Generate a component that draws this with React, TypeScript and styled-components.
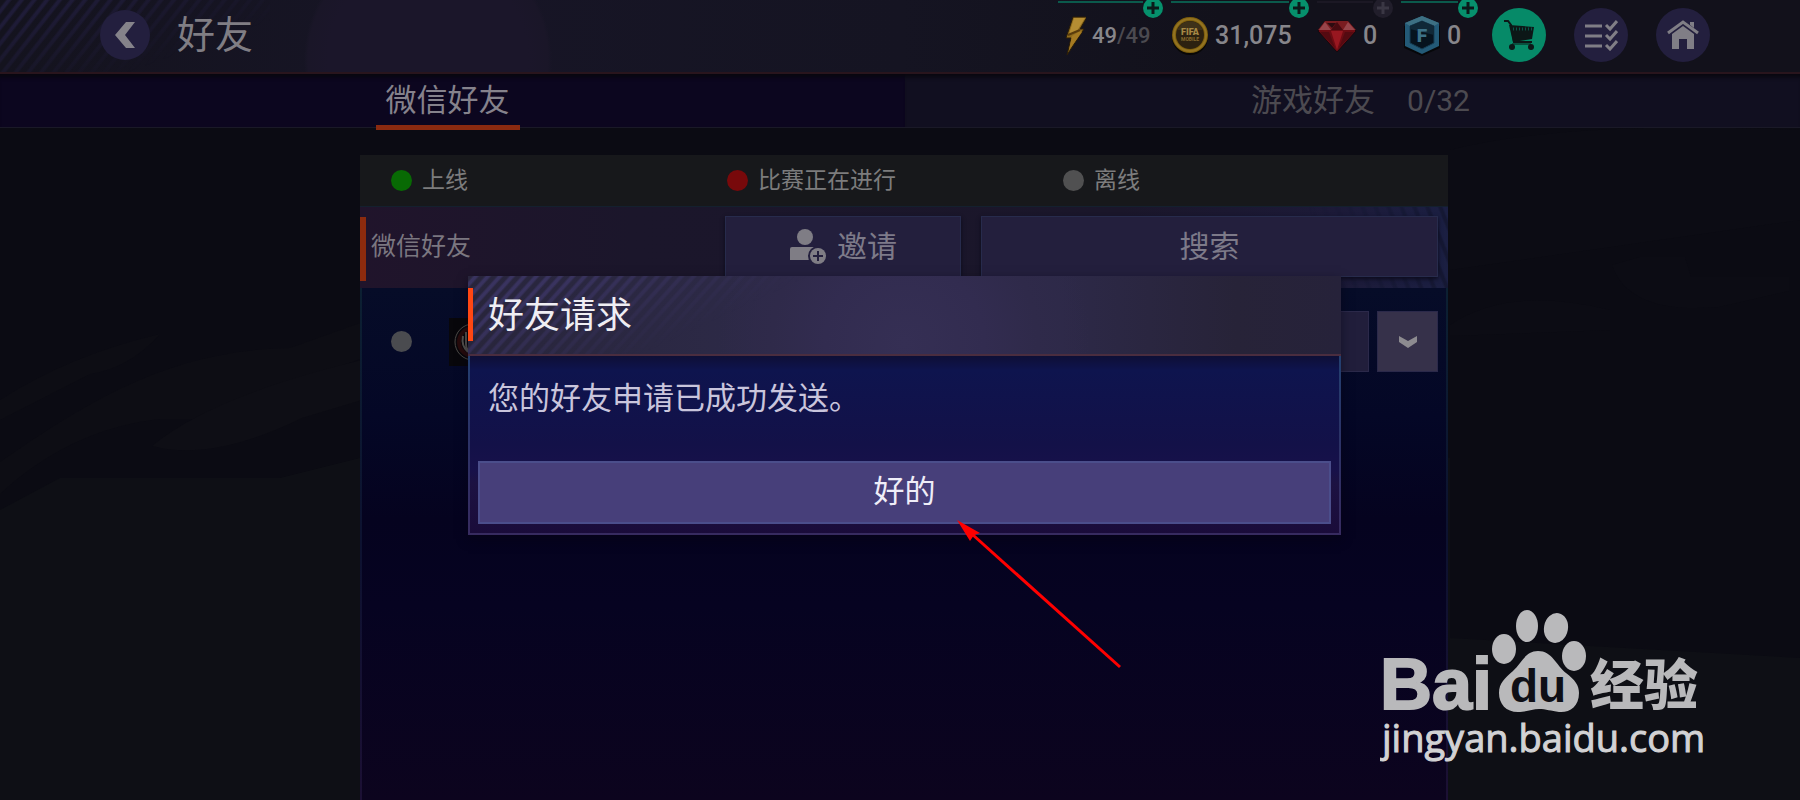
import React from "react";
import styled, { createGlobalStyle, css } from "styled-components";

const GlobalStyle = createGlobalStyle`
  *, *::before, *::after { box-sizing: border-box; }
  body {
    margin: 0;
    background: #0b0b13;
    color: #807e84;
    font-family: Roboto, "Noto Sans CJK SC", sans-serif;
  }
  button { font: inherit; color: inherit; border: 0; padding: 0; margin: 0; cursor: pointer; }
  h1, h2, p { margin: 0; font-weight: 400; }
`;

const Page = styled.div`
  position: relative;
  display: flex;
  flex-direction: column;
  min-height: 100vh;
  overflow: hidden;
  background: #0b0b13;
`;

const Scenery = styled.svg`
  position: absolute;
  inset: 0;
  width: 100%;
  height: 100%;
`;

/* ---------- header ---------- */

const Header = styled.header`
  position: relative;
  display: flex;
  align-items: center;
  height: 74px;
  padding: 0 90px 2px 100px;
  border-bottom: 2px solid #29151d;
  background:
    radial-gradient(circle at 428px 60px, #1b162a 0 100px, #1a1628 120px, transparent 124px),
    linear-gradient(90deg, #14131e, #171526 25%, #151422 50%, #12111b 68%, #12111b);
  &::before {
    content: "";
    position: absolute;
    inset: 0 auto 0 0;
    width: 270px;
    background: repeating-linear-gradient(128deg, transparent 0 4px, #1f1c38 6px 8px, transparent 10px);
    mask-image: linear-gradient(160deg, #000 15%, transparent 70%);
  }
`;

const RoundButton = styled.button<{ $size: number; $tone?: string }>`
  position: relative;
  display: flex;
  align-items: center;
  justify-content: center;
  flex: none;
  width: ${(p) => p.$size}px;
  height: ${(p) => p.$size}px;
  border-radius: 50%;
  background: ${(p) => p.$tone ?? "#231f3e"};
`;

const PageTitle = styled.h1`
  margin-left: 27px;
  font-size: 38px;
  line-height: 50px;
  position: relative;
`;

const Wallet = styled.div`
  display: flex;
  gap: 8px;
  align-self: stretch;
  margin-left: auto;
`;

const Currency = styled.div<{ $width: number; $dim?: boolean }>`
  position: relative;
  display: flex;
  align-items: center;
  flex: none;
  gap: 6px;
  width: ${(p) => p.$width}px;
  padding-top: 2px;
  color: #87868b;
  font-size: 25px;
  font-weight: 500;
  line-height: 30px;
  svg { flex: none; }
  &::before {
    content: "";
    position: absolute;
    top: 1px;
    left: 0;
    right: 20px;
    height: 2px;
    background: ${(p) => (p.$dim ? "#1b1824" : "#0b5a4c")};
  }
`;

const PlusBadge = styled.button<{ $dim?: boolean }>`
  position: absolute;
  top: -2px;
  right: 0;
  display: flex;
  align-items: center;
  justify-content: center;
  width: 20px;
  height: 20px;
  border-radius: 50%;
  background: ${(p) => (p.$dim ? "#211e2b" : "#06906c")};
  color: ${(p) => (p.$dim ? "#3a3744" : "#0b1a1a")};
`;

const Energy = styled.span`
  font-size: 22px;
  i { font-style: normal; color: #4b4a50; }
`;

const Actions = styled.nav`
  display: flex;
  gap: 28px;
  margin-left: 14px;
`;

/* ---------- tabs ---------- */

const Tabs = styled.div`
  position: relative;
  display: grid;
  grid-template-columns: calc(50% + 5px) 1fr;
  height: 54px;
  border-bottom: 1px solid #1a1927;
`;

const Tab = styled.button<{ $active?: boolean }>`
  display: flex;
  align-items: center;
  justify-content: center;
  gap: 32px;
  font-size: 31px;
  line-height: 36px;
  white-space: pre;
  box-shadow: inset 0 6px 4px -3px #08070e;
  ${(p) =>
    p.$active
      ? css`padding-right: 10px; background: #0c061f; color: #85828c;`
      : css`padding-left: 16px; background: #110f20; color: #4c4a50;`}
`;

const TabLabel = styled.span`
  position: relative;
  display: flex;
  align-items: center;
  height: 53px;
  padding: 0 10px;
  &::after {
    content: "";
    position: absolute;
    left: 0;
    right: 0;
    bottom: -3px;
    height: 5px;
    background: #8b2a10;
  }
`;

const TabCount = styled.span`
  font-size: 30px;
`;

/* ---------- friends panel ---------- */

const Main = styled.main`
  position: relative;
  display: flex;
  flex: 1;
  justify-content: center;
  padding: 27px 0 0 8px;
`;

const Panel = styled.section`
  display: flex;
  flex-direction: column;
  width: 100%;
  max-width: 1088px;
`;

const Legend = styled.ul`
  display: grid;
  grid-template-columns: repeat(3, 1fr);
  align-items: center;
  height: 51px;
  margin: 0;
  padding: 0 49px 0 31px;
  list-style: none;
  background: #17181b;
  color: #7c7c7d;
  font-size: 23px;
  line-height: 28px;
`;

const LegendItem = styled.li`
  display: flex;
  align-items: center;
  gap: 10px;
`;

const Dot = styled.span<{ $color: string }>`
  flex: none;
  width: 21px;
  height: 21px;
  border-radius: 50%;
  background: ${(p) => p.$color};
`;

const Toolbar = styled.div`
  position: relative;
  display: flex;
  align-items: flex-start;
  height: 82px;
  padding: 9px 10px 0 0;
  border-top: 1px solid #14202e;
  background: linear-gradient(90deg, #20142b, #1b162b 25%, #1a162a 70%, #1c1a38 90%, #1b1f42);
  &::before {
    content: "";
    position: absolute;
    inset: 0 0 0 auto;
    width: 140px;
    background: repeating-linear-gradient(68deg, transparent 0 6px, #151833 8px 10px, transparent 12px);
    mask-image: linear-gradient(270deg, #000, transparent);
  }
`;

const GroupName = styled.h2`
  display: flex;
  align-items: center;
  flex: 1;
  height: 64px;
  margin-top: 1px;
  padding: 0 0 4px 5px;
  border-left: 6px solid #8c2b0e;
  font-size: 25px;
  line-height: 32px;
  color: #7b7780;
`;

const ToolButton = styled.button<{ $width: number }>`
  position: relative;
  display: flex;
  align-items: center;
  justify-content: center;
  gap: 10px;
  width: ${(p) => p.$width}px;
  height: 61px;
  border: 1px solid #272b4c;
  background: #231f3d;
  box-shadow: 0 2px 4px #0c0b1c;
  color: #7d7a89;
  font-size: 30px;
  line-height: 36px;
  & + & { margin-left: 20px; }
`;

const FriendList = styled.ul`
  flex: 1;
  margin: 0;
  padding: 23px 8px 0 29px;
  list-style: none;
  border: 2px solid;
  border-width: 0 2px;
  border-image: linear-gradient(#0c2032, #0d1230 50%, #1c1034) 1;
  background: linear-gradient(#060c28, #040726 25%, #05031f 45%, #060321 62%, #0c041e);
`;

const FriendRow = styled.li`
  display: flex;
  align-items: center;
  height: 61px;
`;

const Avatar = styled.span`
  width: 48px;
  height: 48px;
  margin-left: 37px;
  background: #08070b;
`;

const RowButton = styled.button<{ $width: number; $tone: string }>`
  display: flex;
  align-items: center;
  justify-content: center;
  width: ${(p) => p.$width}px;
  height: 61px;
  border: 1px solid #2b294a;
  background: ${(p) => p.$tone};
  &:first-of-type { margin-left: auto; }
  & + & { margin-left: 8px; }
`;

/* ---------- dialog ---------- */

const Overlay = styled.div`
  position: absolute;
  inset: 0;
  display: flex;
  align-items: center;
  justify-content: center;
  padding: 10px 0 0 9px;
`;

const Dialog = styled.div`
  width: 100%;
  max-width: 873px;
  box-shadow: 0 4px 10px #05041280;
`;

const DialogHeader = styled.div`
  position: relative;
  display: flex;
  align-items: center;
  height: 80px;
  border-bottom: 2px solid #4a2d3f;
  background:
    radial-gradient(circle at 50% 85%, #352f54, #322c50 18%, #2f2a4a 30%, transparent 42%),
    linear-gradient(90deg, #28253b, #2d2a48 35%, #2d2948 68%, #272338 88%, #26223a);
  &::before {
    content: "";
    position: absolute;
    inset: 0 auto 0 0;
    width: 350px;
    background: repeating-linear-gradient(132deg, transparent 0 3px, #39335f 5px 7px, transparent 9px);
    mask-image: linear-gradient(155deg, #000 20%, transparent 66%);
  }
`;

const DialogTitle = styled.h2`
  position: relative;
  display: flex;
  align-items: center;
  height: 53px;
  padding: 3px 0 0 15px;
  border-left: 5px solid #ff4713;
  color: #efeef3;
  font-size: 36px;
  line-height: 46px;
`;

const DialogBody = styled.div`
  padding: 23px 8px 9px;
  border: 2px solid;
  border-top: 0;
  border-image: linear-gradient(#234070, #2a3468 40%, #372b60) 1;
  background: linear-gradient(#0e0f36, #0e144e 8%, #131148 50%, #17114a 64%, #1c1242 72%, #1a0c3a);
`;

const Message = styled.p`
  padding: 0 10px;
  margin-bottom: 42px;
  color: #c9c5dc;
  font-size: 31px;
  line-height: 40px;
`;

const Confirm = styled.button`
  display: flex;
  align-items: center;
  justify-content: center;
  width: 100%;
  height: 63px;
  border: 2px solid #4b4e8b;
  background: #473f7a;
  color: #efedf8;
  font-size: 31px;
  line-height: 40px;
`;

/* ---------- annotations ---------- */

const Pointer = styled.svg`
  position: absolute;
  left: calc(50% + 55px);
  top: calc(50% + 118px);
  pointer-events: none;
`;

const Watermark = styled.svg`
  position: absolute;
  right: 88px;
  bottom: 24px;
  pointer-events: none;
`;

const Plus = () => (
  <svg width="14" height="14" viewBox="0 0 14 14" aria-hidden="true">
    <path d="M7 1v12M1 7h12" stroke="currentColor" strokeWidth="3" />
  </svg>
);

const BoltIcon = () => (
  <svg width="28" height="40" viewBox="-6 0 28 40" aria-hidden="true">
    <path d="M9 1 23 1 16 13h4L3 39l4-17H2z" fill="#8f6b1c" stroke="#2a1d08" />
    <path d="M10 2 21 2 13 15l-8 3z" fill="#b58d33" />
    <path d="m8 20 8-5 2 1L5 34z" fill="#a57a22" />
    <path d="m4 19 12-5" stroke="#5a3c0c" strokeWidth="2" />
  </svg>
);

const CoinIcon = () => (
  <svg width="38" height="38" viewBox="0 0 38 38" aria-hidden="true">
    <circle cx="19" cy="20" r="18" fill="#080706" />
    <circle cx="19" cy="18" r="18" fill="#7e5f0d" />
    <circle cx="19" cy="18" r="16" fill="none" stroke="#937321" strokeWidth="2" />
    <circle cx="19" cy="18" r="14" fill="#2c2110" />
    <path d="M6 13a14 14 0 0 1 26 0z" fill="#3e3119" />
    <text x="19" y="18" textAnchor="middle" fontFamily="Roboto, sans-serif" fontWeight="900" fontSize="9" fill="#a68845">FIFA</text>
    <text x="19" y="24" textAnchor="middle" fontFamily="Roboto, sans-serif" fontWeight="700" fontSize="5" fill="#86692c">MOBILE</text>
  </svg>
);

const GemIcon = () => (
  <svg width="40" height="34" viewBox="0 0 40 34" aria-hidden="true">
    <path d="M8 2h23l8 10-19 21L1 12z" fill="#6d0c13" stroke="#17080d" />
    <path d="M8 2h23l8 9H1z" fill="#7a1c20" />
    <path d="m2 11 6-8 6 8zM26 11l5-8 7 8z" fill="#97454a" />
    <path d="m14 11 6-8 6 8z" fill="#480a10" />
    <path d="m14 12 6 19 6-19z" fill="#981720" />
    <path d="m3 13 9 0 6 16zM28 13h9L22 29z" fill="#540a11" />
    <path d="M10 4h9l-4 5z" fill="#2c0b10" />
  </svg>
);

const ShieldIcon = () => (
  <svg width="40" height="42" viewBox="-2 0 40 42" aria-hidden="true">
    <path d="M19 3 37 11v22l-18 8L1 33V11z" fill="#060709" />
    <path d="M19 1 36 8v23l-17 8L2 31V8z" fill="#235a77" />
    <path d="M19 1 36 8l-5 3-12-5L7 11 2 8z" fill="#3d7083" />
    <path d="m19 6 12 5v17l-12 6-12-6V11z" fill="#06131e" stroke="#173f56" />
    <path d="m19 6 12 5v9L7 14v-3z" fill="#102837" />
    <text x="19" y="27" textAnchor="middle" fontFamily="Roboto, sans-serif" fontWeight="900" fontSize="19" fill="#3c7187">F</text>
  </svg>
);

const CartIcon = () => (
  <svg width="32" height="32" viewBox="0 0 32 32" aria-hidden="true" fill="none" stroke="#0c1717">
    <path d="M1 2h4l3 4 3 17h18" strokeWidth="2" />
    <path d="M6 6 31 8l-2 12-19 3z" fill="#0c1717" stroke="none" />
    <path d="M10 10h19" stroke="#075747" strokeWidth="3" strokeDasharray="1 2" />
    <circle cx="9" cy="28" r="3" fill="#0c1717" stroke="none" />
    <circle cx="28" cy="28" r="3" fill="#0c1717" stroke="none" />
    <path d="M9 25h19" strokeWidth="1" />
  </svg>
);

const ChecklistIcon = () => (
  <svg width="34" height="32" viewBox="0 0 34 32" aria-hidden="true" fill="none" stroke="#807e86" strokeWidth="3">
    <path d="M1 7h17M1 17h17M1 27h17" />
    <path d="m22 6 4 4 7-8M22 16l4 4 7-8M22 26l4 4 7-8" />
  </svg>
);

const HomeIcon = () => (
  <svg width="32" height="30" viewBox="0 0 32 30" aria-hidden="true" fill="#807e86">
    <path d="M1 13 16 2l15 11" fill="none" stroke="#807e86" strokeWidth="3" />
    <path d="M23 2h4v6l-4-3z" />
    <path d="M16 6 27 14v15h-7V19h-8v10H5V14z" />
  </svg>
);

const InviteIcon = () => (
  <svg width="38" height="36" viewBox="0 0 38 36" aria-hidden="true">
    <circle cx="16" cy="8" r="8" fill="#7f7d85" />
    <path d="M3 18h23v13H1V20q0-2 2-2z" fill="#7f7d85" />
    <circle cx="29" cy="27" r="10" fill="#231f3d" />
    <circle cx="29" cy="27" r="8" fill="#7f7d85" />
    <path d="M29 22v10M24 27h10" stroke="#231f3d" strokeWidth="2" />
  </svg>
);

export default function App() {
  return (
    <>
      <GlobalStyle />
      <Page>
        <Scenery viewBox="0 0 1800 800" preserveAspectRatio="none" aria-hidden="true">
          <path d="M0 400q70-45 160-66-30 34-70 40L0 420zM0 462C90 400 170 350 290 348l70-25v36q-60 20-120 60l-80 0q-90 10-160 75z" fill="#0d0d14" />
          <path d="M152 446q60-50 210-86v40l-60 18q-90 44-150 28z" fill="#0e0e15" />
          <path d="M0 510 60 478h220l80-20h1090v180l350 20v142H0z" fill="#0e0f15" />
          <path d="M1450 150q120-30 350-20v90l-350 50zM1612 265l28-8h45l6 20h98v14l-70 16q-90 8-107-42zM1450 325q60-40 160-15v20l-160 6z" fill="#0c0c14" />
        </Scenery>

        <Header>
          <RoundButton $size={50} aria-label="返回">
            <svg width="22" height="28" viewBox="0 0 22 28" aria-hidden="true">
              <path d="M12 1h9L11 14l10 13h-9L1 14z" fill="#85838a" />
            </svg>
          </RoundButton>
          <PageTitle>好友</PageTitle>
          <Wallet>
            <Currency $width={105}>
              <BoltIcon />
              <Energy>49<i>/49</i></Energy>
              <PlusBadge aria-label="补充体力"><Plus /></PlusBadge>
            </Currency>
            <Currency $width={138}>
              <CoinIcon />
              31,075
              <PlusBadge aria-label="购买金币"><Plus /></PlusBadge>
            </Currency>
            <Currency $width={76} $dim>
              <GemIcon />
              0
              <PlusBadge $dim aria-label="购买宝石"><Plus /></PlusBadge>
            </Currency>
            <Currency $width={77}>
              <ShieldIcon />
              0
              <PlusBadge aria-label="购买点数"><Plus /></PlusBadge>
            </Currency>
          </Wallet>
          <Actions>
            <RoundButton $size={54} $tone="#068a68" aria-label="商店"><CartIcon /></RoundButton>
            <RoundButton $size={54} aria-label="任务"><ChecklistIcon /></RoundButton>
            <RoundButton $size={54} aria-label="主页"><HomeIcon /></RoundButton>
          </Actions>
        </Header>

        <Tabs role="tablist">
          <Tab $active role="tab" aria-selected="true"><TabLabel>微信好友</TabLabel></Tab>
          <Tab role="tab" aria-selected="false"><span>游戏好友</span><TabCount>0/32</TabCount></Tab>
        </Tabs>

        <Main>
          <Panel>
            <Legend>
              <LegendItem><Dot $color="#086a04" />上线</LegendItem>
              <LegendItem><Dot $color="#78090b" />比赛正在进行</LegendItem>
              <LegendItem><Dot $color="#505051" />离线</LegendItem>
            </Legend>
            <Toolbar>
              <GroupName>微信好友</GroupName>
              <ToolButton $width={236}><InviteIcon />邀请</ToolButton>
              <ToolButton $width={457}>搜索</ToolButton>
            </Toolbar>
            <FriendList>
              <FriendRow>
                <Dot $color="#4a4b4f" />
                <Avatar>
                  <svg width="48" height="48" viewBox="0 0 48 48" aria-hidden="true" fill="none">
                    <circle cx="24" cy="24" r="18" stroke="#4b4845" strokeWidth="1" />
                    <circle cx="24" cy="24" r="14" stroke="#260b0c" strokeWidth="4" />
                    <path d="M17 14v12q0 8 7 9M14 18q-2 10 5 16" stroke="#55524e" strokeWidth="2" />
                  </svg>
                </Avatar>
                <RowButton $width={180} $tone="#211e3b" aria-label="查看好友" />
                <RowButton $width={61} $tone="#36314a" aria-label="展开">
                  <svg width="18" height="12" viewBox="0 0 18 12" aria-hidden="true">
                    <path d="m0 0 9 5 9-5v6l-9 6-9-6z" fill="#8d8b90" />
                  </svg>
                </RowButton>
              </FriendRow>
            </FriendList>
          </Panel>
        </Main>

        <Overlay>
          <Dialog role="dialog" aria-modal="true" aria-labelledby="dialog-title">
            <DialogHeader><DialogTitle id="dialog-title">好友请求</DialogTitle></DialogHeader>
            <DialogBody>
              <Message>您的好友申请已成功发送。</Message>
              <Confirm>好的</Confirm>
            </DialogBody>
          </Dialog>
        </Overlay>

        <Pointer width="170" height="156" viewBox="0 0 170 156" aria-hidden="true">
          <path d="m18 17 147 132" stroke="#f00" strokeWidth="3" />
          <path d="m2 2 23 13-6 2-4 6z" fill="#f00" />
        </Pointer>

        <Watermark width="332" height="176" viewBox="0 0 332 176" aria-label="Baidu 经验">
          <g fill="#b9b9bb">
            <text x="0" y="109" fontFamily="'Liberation Sans', sans-serif" fontWeight="700" fontSize="72" stroke="#b9b9bb" strokeWidth="2">Bai</text>
            <ellipse cx="124" cy="49" rx="12" ry="15" />
            <ellipse cx="147" cy="26" rx="11" ry="16" />
            <ellipse cx="176" cy="28" rx="12" ry="15" transform="rotate(10 176 28)" />
            <ellipse cx="194" cy="56" rx="12" ry="15" />
            <path d="M158 51c14 0 18 14 28 22 9 7 13 12 13 20 0 14-10 20-20 19-8-1-13-3-20-3s-12 3-21 3c-12 0-19-8-19-19 0-10 6-15 14-22 9-8 12-20 25-20z" />
            <text x="210" y="105" fontFamily="'Noto Sans CJK SC', sans-serif" fontWeight="900" fontSize="54">经验</text>
          </g>
          <text x="130" y="102" fontFamily="'Liberation Sans', sans-serif" fontWeight="700" fontSize="46" fill="#0f0f16">du</text>
          <text x="2" y="152" fontFamily="'Open Sans', sans-serif" fontSize="38" fontWeight="500" fill="#d2d2d4" stroke="#d2d2d4" strokeWidth="1">jingyan.baidu.com</text>
        </Watermark>
      </Page>
    </>
  );
}
